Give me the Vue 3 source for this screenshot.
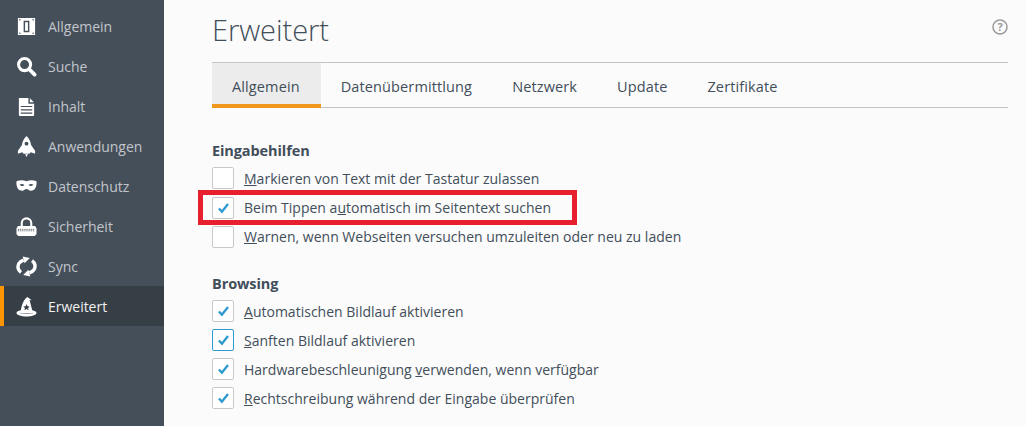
<script setup>
const nav = [
  { key: 'general', label: 'Allgemein' },
  { key: 'search', label: 'Suche' },
  { key: 'content', label: 'Inhalt' },
  { key: 'apps', label: 'Anwendungen' },
  { key: 'privacy', label: 'Datenschutz' },
  { key: 'security', label: 'Sicherheit' },
  { key: 'sync', label: 'Sync' },
  { key: 'advanced', label: 'Erweitert', active: true },
]
const tabs = ['Allgemein', 'Datenübermittlung', 'Netzwerk', 'Update', 'Zertifikate']
const groups = [
  {
    title: 'Eingabehilfen',
    rows: [
      { before: '', key: 'M', after: 'arkieren von Text mit der Tastatur zulassen' },
      { before: 'Beim Tippen a', key: 'u', after: 'tomatisch im Seitentext suchen', checked: true, marked: true },
      { before: '', key: 'W', after: 'arnen, wenn Webseiten versuchen umzuleiten oder neu zu laden' },
    ],
  },
  {
    title: 'Browsing',
    rows: [
      { before: '', key: 'A', after: 'utomatischen Bildlauf aktivieren', checked: true },
      { before: '', key: 'S', after: 'anften Bildlauf aktivieren', checked: true, focus: true },
      { before: 'Hardwarebeschleunigung ', key: 'v', after: 'erwenden, wenn verfügbar', checked: true },
      { before: '', key: 'R', after: 'echtschreibung während der Eingabe überprüfen', checked: true },
    ],
  },
]
</script>

<template>
  <div class="app">
    <aside class="side">
      <div v-for="n in nav" :key="n.key" class="nav" :class="{ on: n.active }">
        <svg class="ico" viewBox="0 0 22 22">
          <g v-if="n.key === 'general'">
            <path fill="#fff" fill-rule="evenodd" d="M2 2h18v18H2zM8 5v12h6V5z" />
            <path fill="#fff" d="M9.500 6.500h3v9h-3z" />
            <circle cx="4" cy="18" r=".8" fill="#454f5a" /><circle cx="18" cy="18" r=".8" fill="#454f5a" />
            <circle cx="4" cy="4" r=".8" fill="#454f5a" /><circle cx="18" cy="4" r=".8" fill="#454f5a" />
          </g>
          <g v-else-if="n.key === 'search'" fill="none" stroke="#fff">
            <circle cx="9" cy="9" r="6.300" stroke-width="3.200" />
            <path d="M14 14l5.500 5.500" stroke-width="3.800" stroke-linecap="round" />
          </g>
          <g v-else-if="n.key === 'content'">
            <path fill="#fff" d="M3 2h10v6h6v12a1 1 0 0 1-1 1H4a1 1 0 0 1-1-1zM14.500 2.300l4.300 4.300h-4.300z" />
            <path stroke="#454f5a" stroke-width="1.300" d="M5 11h12M5 14.500h12M5 18h12" />
          </g>
          <g v-else-if="n.key === 'apps'">
            <path fill="#fff" d="M11 0c2.800 2.500 4.400 6 4.800 9.500L20 15.500v3l-4.500-1.500-1.500 1.500H8L6.500 17 2 18.500v-3l4.200-6C6.600 6 8.200 2.500 11 0z" />
            <circle cx="11" cy="8" r="2" fill="#454f5a" />
            <path fill="#fff" d="M9.500 19h3L11 22z" />
          </g>
          <g v-else-if="n.key === 'privacy'">
            <path fill="#fff" fill-rule="evenodd" d="M.500 5.500c3.500-1.500 7-1.500 10.500 0 3.500-1.500 7-1.500 10.500 0 .5 5.500-1.500 10-6 10-2 0-3-1.800-4.500-1.800S8.500 15.500 6.500 15.500c-4.500 0-6.500-4.500-6-10zM3.800 9c1.200 2 4 2 5 .4C7.800 8.300 5.500 8.200 3.800 9zm9.400.4c1 1.600 3.800 1.600 5-.4-1.700-.8-4-.7-5 .4z" />
          </g>
          <g v-else-if="n.key === 'security'">
            <path fill="none" stroke="#fff" stroke-width="2.200" d="M6 11V7.500a5 5 0 0 1 10 0V11" />
            <path fill="#fff" d="M2 10.500h18l1.500 2.500v6l-2 2H2.500l-2-2v-6z" />
            <path fill="none" stroke="#454f5a" stroke-width="1" stroke-dasharray="1 1" d="M2 14h18M2 15.500h18" />
          </g>
          <g v-else-if="n.key === 'sync'" fill="none" stroke="#fff">
            <path stroke-width="3.600" d="M8 4.200C3.800 5.600 1.500 9 2.200 12.700c.4 2 1.500 3.400 3 4.500" />
            <path stroke-width="3.600" d="M14 17.800c4.200-1.400 6.500-4.800 5.800-8.500-.4-2-1.500-3.400-3-4.500" />
            <path fill="#fff" stroke="none" d="M7 .5l7.500 1.500-5.500 5.500zM15 21.500L7.500 20l5.500-5.500z" />
          </g>
          <g v-else>
            <path fill="#fff" fill-rule="evenodd" d="M12 1l4.500 3.500-2.300-.2L17 15c2.500.5 4.500 1.400 4.500 2.800C21.500 20 16 21.500 11 21.500S.5 20 .5 17.800C.5 16.400 2.500 15.500 5 15 6 9.500 8 3.500 12 1zM3.500 17.500c2.500 1.800 12.500 1.800 15 0-4 1.200-11 1.200-15 0z" />
            <path fill="#363e46" d="M11 8.500l1 2.300 2.400.2-1.800 1.600.6 2.400-2.200-1.300L8.800 15l.6-2.400L7.600 11l2.400-.2z" />
          </g>
        </svg>
        <span>{{ n.label }}</span>
      </div>
    </aside>

    <main class="main">
      <header class="head">
        <h1>Erweitert</h1>
        <svg class="help" viewBox="0 0 16 16">
          <circle cx="8" cy="8" r="7" fill="none" stroke="#9a9a9a" stroke-width="1.500" />
          <text x="8" y="11.800" text-anchor="middle" class="q">?</text>
        </svg>
      </header>

      <nav class="tabs">
        <div v-for="(t, i) in tabs" :key="t" class="tab" :class="{ sel: i === 0 }">{{ t }}</div>
      </nav>

      <section v-for="g in groups" :key="g.title" class="group">
        <h2>{{ g.title }}</h2>
        <div v-for="r in g.rows" :key="r.key + r.after" class="row" :class="{ marked: r.marked }">
          <span class="box" :class="{ focus: r.focus }">
            <svg v-if="r.checked" viewBox="0 0 22 22" class="tick">
              <path d="M6.500 11.500l3.300 3.500L16.500 6.500" fill="none" stroke="#2f9ad0" stroke-width="2.600" />
            </svg>
          </span>
          <span class="lbl">{{ r.before }}<u>{{ r.key }}</u>{{ r.after }}</span>
        </div>
      </section>
    </main>
  </div>
</template>

<style>
html, body { margin: 0; background: #fbfbfb; }
</style>

<style scoped>
.app {
  display: flex;
  width: 1026px;
  height: 426px;
  overflow: hidden;
  background: #fbfbfb;
  font-family: "Open Sans", "Noto Sans", sans-serif;
  color: #424e5a;
}
.side {
  flex: 0 0 164px;
  box-sizing: border-box;
  padding-top: 6px;
  background: #454f5a;
}
.nav {
  display: flex;
  align-items: center;
  gap: 11px;
  box-sizing: border-box;
  height: 40px;
  padding-left: 16px;
  font-size: 14px;
  letter-spacing: -.02px;
  color: #c1c5ca;
}
.nav.on {
  padding-left: 12px;
  border-left: 4px solid #ff9500;
  background: #363e46;
  color: #f1f1f1;
}
.ico { flex: none; width: 21px; height: 21px; }
.main {
  flex: 1;
  box-sizing: border-box;
  padding: 0 18px 0 48px;
  min-width: 0;
}
.head {
  display: flex;
  align-items: center;
  justify-content: space-between;
  height: 62px;
  box-sizing: border-box;
  padding: 0 0 4px;
}
h1 {
  margin: 0;
  font-size: 29px;
  font-weight: 300;
  letter-spacing: -.05px;
  color: #424e5a;
}
.help { width: 16px; height: 16px; margin-top: -4px; }
.q { font-size: 11px; font-weight: 700; fill: #9a9a9a; }
.tabs {
  display: flex;
  height: 46px;
  box-sizing: border-box;
  border-top: 1px solid #c4c4c4;
  border-bottom: 1px solid #c4c4c4;
}
.tab {
  box-sizing: border-box;
  height: 45px;
  padding: 0 20px;
  line-height: 47px;
  font-size: 14.500px;
  letter-spacing: .12px;
}
.tab.sel {
  padding-right: 21px;
  border-bottom: 4px solid #f0971c;
  background: #ececec;
}
.group { margin-top: 33px; }
.group + .group { margin-top: 22.400px; }
h2 {
  margin: 0 0 2.600px;
  font-size: 14.500px;
  font-weight: 700;
  line-height: 20px;
  letter-spacing: -.1px;
}
.group + .group h2 { margin-bottom: 3px; }
.row {
  position: relative;
  display: flex;
  align-items: center;
  gap: 10px;
  height: 29.300px;
  font-size: 14px;
  letter-spacing: .01px;
}
.group + .group .row { height: 29px; }
.row.marked::after {
  content: "";
  position: absolute;
  left: -14px;
  top: 0;
  width: 379px;
  height: 35px;
  margin-top: -3px;
  box-sizing: border-box;
  border: 5px solid #e6202e;
}
.box {
  flex: none;
  width: 22px;
  height: 22px;
  box-sizing: border-box;
  border: 1px solid #c8c8c8;
  border-radius: 2px;
  background: #fff;
}
.box.focus { border-color: #2f9ad0; }
.tick { display: block; width: 20px; height: 20px; }
.lbl { white-space: nowrap; }
</style>
